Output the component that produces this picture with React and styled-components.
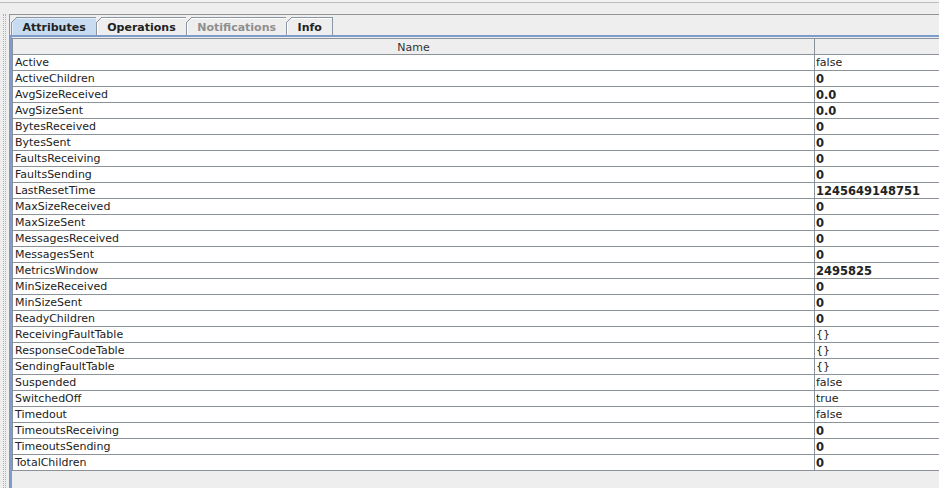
import React from 'react';
import styled, { createGlobalStyle } from 'styled-components';

const GlobalStyle = createGlobalStyle`
  html, body {
    margin: 0;
    padding: 0;
    background: #eeeeee;
    font-family: "DejaVu Sans", "Liberation Sans", sans-serif;
  }
`;

const Page = styled.div`
  width: 939px;
  height: 488px;
  overflow: hidden;
  display: flex;
  flex-direction: column;
  background: #eeeeee;
`;

const TopStrip = styled.div`
  height: 2px;
  border-bottom: 1px solid #bcbcbc;
  background: #f2f2f2;
`;

const Body = styled.div`
  flex: 1;
  display: flex;
  margin-top: 11px;
  min-height: 0;
`;

const Splitter = styled.div`
  width: 1px;
  margin: 0 3px 0 3px;
  border-left: 1px dotted #b0b0b0;
  border-right: 1px dotted #b0b0b0;
`;

const Panel = styled.div`
  flex: 1;
  min-width: 0;
  display: flex;
  flex-direction: column;
  border-top: 1px solid #8f9499;
  border-left: 1px solid #8f9499;
  padding-top: 2px;
`;

const TabRow = styled.div`
  display: flex;
  align-items: stretch;
  height: 18px;
  margin-left: 1px;
`;

const Tab = styled.div`
  position: relative;
  display: flex;
  align-items: center;
  padding: 1px 10px 0 10.5px;
  border-top: 1px solid #8a96a3;
  border-left: 1px solid #8a96a3;
  border-right: ${({ $last }) => ($last ? '1px solid #8a96a3' : 'none')};
  background: ${({ $active }) => ($active ? '#c8dcf1' : '#eeeeee')};
  box-shadow: inset 1px 1px 0 ${({ $active }) => ($active ? '#e4eefa' : '#ffffff')};
  color: ${({ $disabled }) => ($disabled ? '#8e8e8e' : '#222222')};
  font-size: 11px;
  font-weight: bold;
  white-space: nowrap;

  &::before {
    content: '';
    position: absolute;
    top: -1px;
    left: -1px;
    width: 6px;
    height: 6px;
    background: linear-gradient(
      to bottom right,
      #eeeeee calc(50% - 0.7px),
      #8a96a3 calc(50% - 0.7px),
      #8a96a3 calc(50% + 0.7px),
      ${({ $active }) => ($active ? '#c8dcf1' : '#eeeeee')} calc(50% + 0.7px)
    );
  }
`;

const TabPane = styled.div`
  flex: 1;
  min-height: 0;
  border-top: 2px solid #7d9ccb;
  border-left: 2px solid #7d9ccb;
  padding-top: 1px;
  overflow: hidden;
`;

const Table = styled.div`
  width: 1000px;
  border-left: 1px solid #8c9299;
  border-top: 1px solid #8c9299;
  background: #ffffff;
`;

const HeaderRow = styled.div`
  display: flex;
  height: 15px;
  border-bottom: 1px solid #8c9299;
  background: #eeeeee;
`;

const HeaderCell = styled.div`
  width: ${({ $w }) => $w};
  box-sizing: border-box;
  border-right: 1px solid #8c9299;
  padding-top: 1px;
  text-align: center;
  font-size: 11px;
  line-height: 15px;
  color: #333333;
`;

const Row = styled.div`
  display: flex;
  height: 15px;
  border-bottom: 1px solid #8c9299;
`;

const NameCell = styled.div`
  width: 802px;
  box-sizing: border-box;
  border-right: 1px solid #8c9299;
  padding-left: 2px;
  font-size: 11px;
  line-height: 16px;
  color: #222222;
  white-space: nowrap;
`;

const ValueCell = styled.div`
  flex: 1;
  padding-left: 1px;
  font-size: ${({ $bold }) => ($bold ? '11.5px' : '11px')};
  font-weight: ${({ $bold }) => ($bold ? 'bold' : 'normal')};
  line-height: 16px;
  color: #222222;
  white-space: nowrap;
`;

const rows = [
  ['Active', 'false', false],
  ['ActiveChildren', '0', true],
  ['AvgSizeReceived', '0.0', true],
  ['AvgSizeSent', '0.0', true],
  ['BytesReceived', '0', true],
  ['BytesSent', '0', true],
  ['FaultsReceiving', '0', true],
  ['FaultsSending', '0', true],
  ['LastResetTime', '1245649148751', true],
  ['MaxSizeReceived', '0', true],
  ['MaxSizeSent', '0', true],
  ['MessagesReceived', '0', true],
  ['MessagesSent', '0', true],
  ['MetricsWindow', '2495825', true],
  ['MinSizeReceived', '0', true],
  ['MinSizeSent', '0', true],
  ['ReadyChildren', '0', true],
  ['ReceivingFaultTable', '{}', false],
  ['ResponseCodeTable', '{}', false],
  ['SendingFaultTable', '{}', false],
  ['Suspended', 'false', false],
  ['SwitchedOff', 'true', false],
  ['Timedout', 'false', false],
  ['TimeoutsReceiving', '0', true],
  ['TimeoutsSending', '0', true],
  ['TotalChildren', '0', true],
];

const App = () => (
  <Page>
    <GlobalStyle />
    <TopStrip />
    <Body>
      <Splitter />
      <Panel>
        <TabRow>
          <Tab $active>Attributes</Tab>
          <Tab>Operations</Tab>
          <Tab $disabled>Notifications</Tab>
          <Tab $last>Info</Tab>
        </TabRow>
        <TabPane>
          <Table>
            <HeaderRow>
              <HeaderCell $w="802px">Name</HeaderCell>
              <HeaderCell $w="198px" />
            </HeaderRow>
            {rows.map(([name, value, bold]) => (
              <Row key={name}>
                <NameCell>{name}</NameCell>
                <ValueCell $bold={bold}>{value}</ValueCell>
              </Row>
            ))}
          </Table>
        </TabPane>
      </Panel>
    </Body>
  </Page>
);

export default App;
